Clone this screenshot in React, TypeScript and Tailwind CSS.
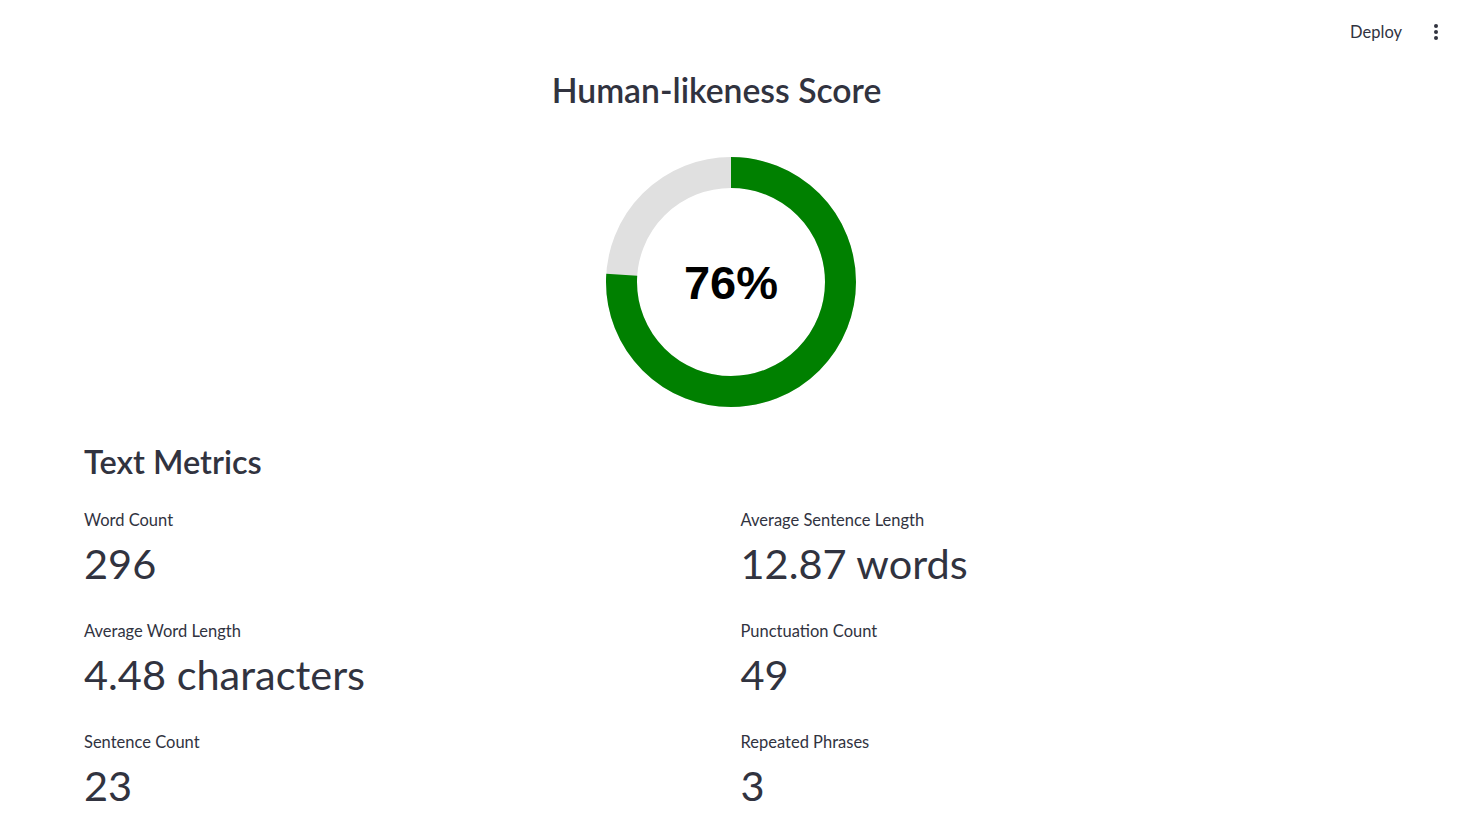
import React from "react";

const font = { fontFamily: "Lato, 'Noto Sans', sans-serif" };

function Metric({ label, value }: { label: string; value: string }) {
  return (
    <div className="flex flex-col">
      <div className="text-[16.5px] leading-[22px] text-[#31333F]">{label}</div>
      <div className="text-[41.5px] leading-[56px] mt-[4px] text-[#31333F]">{value}</div>
    </div>
  );
}

function Donut() {
  const r = 109.5;
  const c = 2 * Math.PI * r;
  const pct = 0.76;
  return (
    <svg width="252" height="252" viewBox="0 0 252 252">
      <circle cx="126" cy="126" r={r} fill="none" stroke="#e0e0e0" strokeWidth="31" />
      <circle
        cx="126"
        cy="126"
        r={r}
        fill="none"
        stroke="#008000"
        strokeWidth="31"
        strokeDasharray={`${c * pct} ${c}`}
        transform="rotate(-90 126 126)"
      />
      <text
        x="126"
        y="143"
        textAnchor="middle"
        fontFamily="'Liberation Sans', Arial, sans-serif"
        fontWeight="700"
        fontSize="47"
        fill="#000"
      >
        76%
      </text>
    </svg>
  );
}

export default function App() {
  return (
    <div className="w-[1465px] h-[836px] bg-white overflow-hidden" style={font}>
      <div className="h-[60px] flex items-center justify-end pr-[26px] pt-[4px]">
        <span className="text-[16.5px] text-[#31333F] mr-[31px]">Deploy</span>
        <span className="flex flex-col gap-[2px] items-center w-[6px]">
          <span className="w-[4px] h-[4px] rounded-full bg-[#31333F]" />
          <span className="w-[4px] h-[4px] rounded-full bg-[#31333F]" />
          <span className="w-[4px] h-[4px] rounded-full bg-[#31333F]" />
        </span>
      </div>
      <div className="px-[84px]">
        <div className="flex justify-center pr-[32px]">
          <h2 className="text-[33.7px] leading-[60px] font-semibold text-[#31333F]">Human-likeness Score</h2>
        </div>
        <div className="flex justify-center mt-[36px] pr-[4px]">
          <Donut />
        </div>
        <h3 className="text-[32.5px] leading-[46px] font-semibold text-[#31333F] mt-[31px]">Text Metrics</h3>
        <div className="grid grid-cols-2 gap-x-[16px] gap-y-[29px] mt-[24px]">
          <Metric label="Word Count" value="296" />
          <Metric label="Average Sentence Length" value="12.87 words" />
          <Metric label="Average Word Length" value="4.48 characters" />
          <Metric label="Punctuation Count" value="49" />
          <Metric label="Sentence Count" value="23" />
          <Metric label="Repeated Phrases" value="3" />
        </div>
      </div>
    </div>
  );
}
